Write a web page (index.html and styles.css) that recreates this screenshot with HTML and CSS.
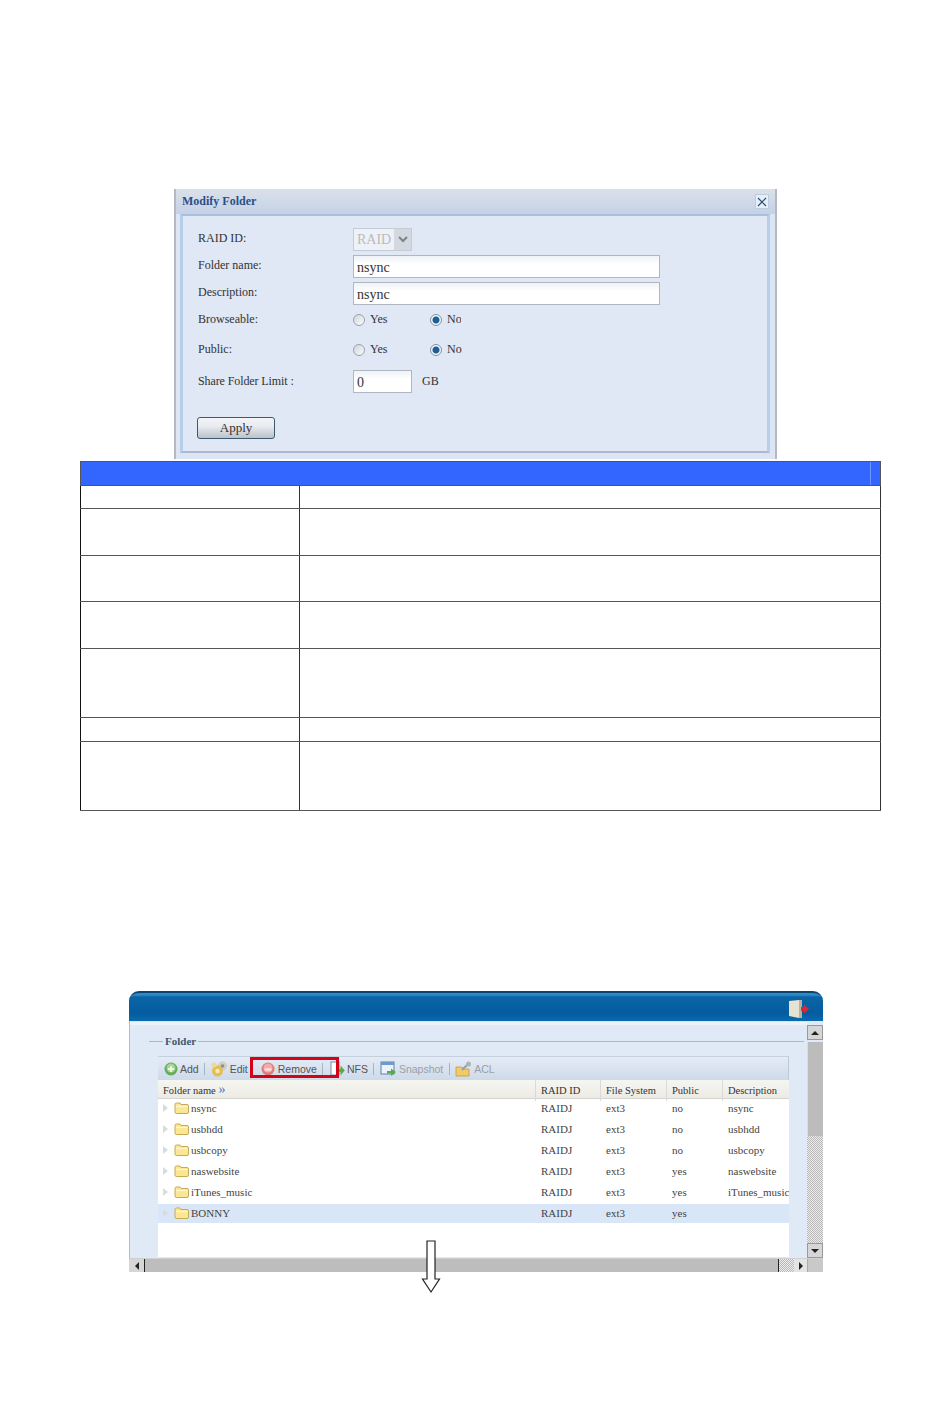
FILE: index.html
```html
<!DOCTYPE html>
<html lang="en">
<head>
  <meta charset="UTF-8">
  <title>Modify Folder</title>
  <link rel="stylesheet" href="styles.css">
</head>
<body>
  <div class="page">

    <!-- Modify Folder dialog -->
    <div class="dialog">
      <div class="dialog-title">
        <span>Modify Folder</span>
        <button class="close-btn">
          <svg width="10" height="10" viewBox="0 0 10 10"><path d="M1 1L9 9M9 1L1 9" stroke="#2c4a6e" stroke-width="1.2" fill="none"/></svg>
        </button>
      </div>
      <div class="dialog-body">
        <div class="form-row row-first">
          <label>RAID ID:</label>
          <div class="combo">
            <span class="combo-text">RAID</span>
            <span class="combo-btn">
              <svg width="10" height="7" viewBox="0 0 10 7"><path d="M1 1L5 5L9 1" stroke="#7b848c" stroke-width="2" fill="none"/></svg>
            </span>
          </div>
        </div>
        <div class="form-row">
          <label>Folder name:</label>
          <input class="text-input wide" type="text" value="nsync">
        </div>
        <div class="form-row">
          <label>Description:</label>
          <input class="text-input wide" type="text" value="nsync">
        </div>
        <div class="form-row">
          <label>Browseable:</label>
          <div class="radios clipped">
            <span class="radio-item"><i class="radio"></i>Yes</span>
            <span class="radio-item"><i class="radio on"></i>No</span>
          </div>
        </div>
        <div class="form-row row-public">
          <label>Public:</label>
          <div class="radios">
            <span class="radio-item"><i class="radio"></i>Yes</span>
            <span class="radio-item"><i class="radio on"></i>No</span>
          </div>
        </div>
        <div class="form-row row-limit">
          <label class="tight">Share Folder Limit :</label>
          <input class="text-input short" type="text" value="0">
          <span class="unit">GB</span>
        </div>
        <button class="apply-btn">Apply</button>
      </div>
    </div>

    <!-- Empty description table -->
    <table class="desc-table">
      <colgroup>
        <col class="col-a">
        <col>
      </colgroup>
      <tr class="h24">
        <th colspan="2"><div class="th-inner"></div></th>
      </tr>
      <tr class="h23"><td></td><td></td></tr>
      <tr class="h47"><td></td><td></td></tr>
      <tr class="h46"><td></td><td></td></tr>
      <tr class="h47"><td></td><td></td></tr>
      <tr class="h69"><td></td><td></td></tr>
      <tr class="h24"><td></td><td></td></tr>
      <tr class="h69"><td></td><td></td></tr>
    </table>

    <!-- Folder manager window -->
    <div class="app">
      <div class="app-bar">
        <svg class="logout" width="22" height="20" viewBox="0 0 22 20">
          <path d="M1 2L11 1V19L1 17Z" fill="#e6e2d2"/>
          <path d="M11 1H14V19H11Z" fill="#b4b3a2"/>
          <path d="M13 8H16V5.500L21 10L16 14.500V12H13Z" fill="#d8283c"/>
        </svg>
      </div>
      <div class="app-main">
        <div class="content">
          <fieldset class="folder-box">
            <legend>Folder</legend>
            <div class="toolbar">
              <span class="tool">
                <svg width="14" height="14" viewBox="0 0 14 14"><circle cx="7" cy="7" r="6.5" fill="#66ad5a"/><circle cx="7" cy="6" r="4.500" fill="#a4d496"/><path d="M7 4V10M4 7H10" stroke="#eef8e8" stroke-width="1.800"/></svg>
                Add
              </span>
              <i class="sep"></i>
              <span class="tool">
                <svg width="17" height="16" viewBox="0 0 17 16"><circle cx="11.500" cy="5" r="4.500" fill="#cfcfc6"/><circle cx="11.500" cy="5" r="1.800" fill="#8f8f86"/><circle cx="6.500" cy="10" r="5.500" fill="#e6bd55"/><circle cx="6.500" cy="10" r="2.200" fill="#fbeeb8"/><circle cx="3" cy="4" r="2.500" fill="#e9d9a0"/></svg>
                Edit
              </span>
              <span class="tool tool-remove">
                <svg width="14" height="14" viewBox="0 0 14 14"><circle cx="7" cy="7" r="6.500" fill="#e07c78"/><circle cx="7" cy="6" r="4.500" fill="#f2adaa"/><path d="M3.500 7.500H10.500" stroke="#fbe3e1" stroke-width="2.200"/></svg>
                Remove
              </span>
              <i class="sep"></i>
              <span class="tool">
                <svg width="16" height="16" viewBox="0 0 16 16"><rect x="2" y="1" width="8" height="13" fill="#fff" stroke="#7a8ca6"/><path d="M9 8H11.500V4.500L15.800 9.500L11.500 14.500V11H9Z" fill="#5aaa48"/></svg>
                NFS
              </span>
              <i class="sep"></i>
              <span class="tool muted">
                <svg width="17" height="16" viewBox="0 0 17 16"><rect x="1" y="1" width="13" height="12" fill="#eaf2fb" stroke="#5a82ad"/><rect x="1" y="1" width="13" height="3" fill="#6f9bcb"/><path d="M7 10H11V7.500L16 11L11 15V12.500H7Z" fill="#5aaa48"/></svg>
                Snapshot
              </span>
              <i class="sep"></i>
              <span class="tool muted">
                <svg width="17" height="16" viewBox="0 0 17 16"><path d="M1 6H7L8 8H14V15H1Z" fill="#f2cb67" stroke="#c49a3c" stroke-width=".8"/><path d="M7 9L13 3" stroke="#989fa8" stroke-width="2"/><circle cx="13.500" cy="3" r="2.500" fill="#adb3bb"/></svg>
                ACL
              </span>
            </div>

            <div class="grid">
              <div class="grid-head">
                <span>Folder name <b class="more">&raquo;</b></span>
                <span>RAID ID</span>
                <span>File System</span>
                <span>Public</span>
                <span>Description</span>
              </div>
              <div class="grid-rows">
                <div class="grid-row">
                  <span class="name"><i class="twist"></i><svg class="folder" viewBox="0 0 15 12"><use href="#folder-icon"/></svg>nsync</span>
                  <span>RAIDJ</span><span>ext3</span><span>no</span><span>nsync</span>
                </div>
                <div class="grid-row">
                  <span class="name"><i class="twist"></i><svg class="folder" viewBox="0 0 15 12"><use href="#folder-icon"/></svg>usbhdd</span>
                  <span>RAIDJ</span><span>ext3</span><span>no</span><span>usbhdd</span>
                </div>
                <div class="grid-row">
                  <span class="name"><i class="twist"></i><svg class="folder" viewBox="0 0 15 12"><use href="#folder-icon"/></svg>usbcopy</span>
                  <span>RAIDJ</span><span>ext3</span><span>no</span><span>usbcopy</span>
                </div>
                <div class="grid-row">
                  <span class="name"><i class="twist"></i><svg class="folder" viewBox="0 0 15 12"><use href="#folder-icon"/></svg>naswebsite</span>
                  <span>RAIDJ</span><span>ext3</span><span>yes</span><span>naswebsite</span>
                </div>
                <div class="grid-row">
                  <span class="name"><i class="twist"></i><svg class="folder" viewBox="0 0 15 12"><use href="#folder-icon"/></svg>iTunes_music</span>
                  <span>RAIDJ</span><span>ext3</span><span>yes</span><span>iTunes_music</span>
                </div>
                <div class="grid-row selected">
                  <span class="name"><i class="twist"></i><svg class="folder" viewBox="0 0 15 12"><use href="#folder-icon"/></svg>BONNY</span>
                  <span>RAIDJ</span><span>ext3</span><span>yes</span><span></span>
                </div>
              </div>
            </div>
          </fieldset>
        </div>

        <div class="vscroll">
          <span class="sb-btn"><i class="tri tri-up"></i></span>
          <span class="sb-thumb"></span>
          <span class="sb-track"></span>
          <span class="sb-btn"><i class="tri tri-down"></i></span>
        </div>
      </div>

      <div class="hscroll">
        <span class="hb-btn"><i class="tri tri-left"></i></span>
        <span class="hb-thumb"></span>
        <span class="hb-track"></span>
        <span class="hb-btn"><i class="tri tri-right"></i></span>
        <span class="hb-corner"></span>
      </div>

      <!-- annotation box round the Remove button -->
      <div class="callout"></div>
    </div>

    <!-- annotation arrow -->
    <svg class="down-arrow" width="20" height="54" viewBox="0 0 20 54">
      <path d="M6 1H14V39H18.500L10 52L1.500 39H6Z" fill="#fff" stroke="#222" stroke-width="1.200"/>
    </svg>

    <svg class="defs" width="0" height="0">
      <defs>
        <g id="folder-icon">
          <path d="M1 2.500Q1 1 2.500 1H6L7 2.500H13Q14.500 2.500 14.500 4V10Q14.500 11.500 13 11.500H2.500Q1 11.500 1 10Z" fill="#fbe793" stroke="#c2a247" stroke-width=".9"/>
          <path d="M2 4.500H13.500" stroke="#fff6cf" stroke-width="1.200"/>
        </g>
      </defs>
    </svg>
  </div>
</body>
</html>
```

FILE: styles.css
```css
body {
  margin: 0;
  background-color: white;
  font-family: 'Liberation Serif', serif;
  color: #333;
}

.page {
  position: relative;
  width: 950px;
  height: 1420px;
  overflow: hidden;
  padding-top: 189px;
  box-sizing: border-box;
}

.defs {
  position: absolute;
}

/* dialog */
.dialog {
  width: 603px;
  height: 270px;
  margin-left: 174px;
  box-sizing: border-box;
  background-color: #dde5f3;
  border-left: 2px solid #b4b8bf;
  border-right: 2px solid #b4b8bf;
  padding-bottom: 6px;
  display: flex;
  flex-direction: column;
}

.dialog-title {
  height: 25px;
  flex: none;
  display: flex;
  align-items: center;
  justify-content: space-between;
  padding: 0 6px 0 6px;
  background: linear-gradient(#dbe1ea, #c4d1e6);
  color: #2b4f88;
  font-size: 12px;
  font-weight: bold;
}

.close-btn {
  width: 14px;
  height: 15px;
  padding: 0;
  display: flex;
  align-items: center;
  justify-content: center;
  background-color: #e6eff9;
  border: 1px solid #bccbdd;
}

.dialog-body {
  flex: 1;
  margin: 0 5px 0 4px;
  padding: 0 0 0 15px;
  background-color: #e0e7f5;
  border-left: 3px solid #b6cdeb;
  border-right: 3px solid #b6cdeb;
  border-top: 2px solid #a9bfdd;
  border-bottom: 2px solid #a9b8d6;
}

.form-row {
  display: flex;
  align-items: center;
  height: 23px;
  margin-bottom: 4px;
  font-size: 12px;
}

.row-first {
  margin-top: 12px;
}

.row-public {
  margin-top: 7px;
}

.row-limit {
  margin-top: 8px;
  margin-bottom: 24px;
}

.form-row label {
  width: 155px;
  flex: none;
  margin-top: -3px;
}

.form-row label.tight {
  letter-spacing: -0.1px;
  margin-top: 0;
}

.combo {
  display: flex;
  width: 59px;
  height: 23px;
  box-sizing: border-box;
  background-color: #eef2f8;
  border: 1px solid #c5ccd6;
}

.combo-text {
  flex: 1;
  color: #bbb;
  font-size: 14px;
  line-height: 22px;
  padding-left: 3px;
}

.combo-btn {
  width: 17px;
  display: flex;
  align-items: center;
  justify-content: center;
  background-color: #d3d9e1;
}

.text-input {
  height: 23px;
  box-sizing: border-box;
  padding: 2px 0 0 3px;
  border: 1px solid #b0b7c3;
  background: linear-gradient(#eef1f6, white 8px);
  font-family: 'Liberation Serif', serif;
  font-size: 14px;
  color: #333;
  outline: none;
}

.wide {
  width: 307px;
}

.short {
  width: 59px;
}

.unit {
  margin-left: 10px;
  margin-top: -1px;
}

.radios {
  display: flex;
  margin-top: -2px;
}

.clipped {
  width: 108px;
  overflow: hidden;
}

.radio-item {
  width: 77px;
  flex: none;
  display: flex;
  align-items: center;
  gap: 5px;
}

.radio {
  width: 12px;
  height: 12px;
  box-sizing: border-box;
  border: 1px solid #9aa3ad;
  border-radius: 50%;
  background: linear-gradient(135deg, #cfd4da, #fbfcfd);
}

.radio.on {
  background: radial-gradient(circle, #1c5f96 0, #1c5f96 3px, #f5f7fa 4px);
  border-color: #7f93a8;
}

.apply-btn {
  display: block;
  width: 78px;
  height: 22px;
  margin-left: -1px;
  padding: 0;
  background: linear-gradient(#f2f4f8, #e9ecf1 40%, #bcc2ca);
  border: 1px solid #3b5a70;
  border-radius: 3px;
  font-family: 'Liberation Serif', serif;
  font-size: 13px;
  color: #333;
}

/* table */
.desc-table {
  width: 801px;
  margin: 2px 0 0 80px;
  border-collapse: collapse;
  table-layout: fixed;
}

.desc-table th {
  background-color: #3366ff;
  border: 1px solid #555;
  padding: 0;
}

.desc-table td {
  border-top: 1px solid #555;
  border-bottom: 1px solid #555;
  border-left: 1px solid #111;
  border-right: 1px solid #333;
  padding: 0;
}

.col-a {
  width: 219px;
}

.th-inner {
  width: 789px;
  height: 23px;
  border-right: 1px solid #6f93ff;
}

.h23 { height: 23px; }
.h24 { height: 24px; }
.h46 { height: 46px; }
.h47 { height: 47px; }
.h69 { height: 69px; }

/* folder window */
.app {
  position: relative;
  width: 694px;
  margin: 180px 0 0 129px;
}

.app-bar {
  height: 30px;
  box-sizing: border-box;
  display: flex;
  align-items: center;
  justify-content: flex-end;
  padding-right: 13px;
  border-radius: 10px 10px 0 0;
  border-top: 2px solid #0e4470;
  background: linear-gradient(#2c8ac6 0, #2c8ac6 2px, #0b64a6 4px, #045c9e 20px, #0a6ab0);
}

.logout {
  margin-top: 3px;
}

.app-main {
  display: flex;
  height: 237px;
  border-left: 1px solid #b8bcc2;
  background-color: #e0e9f6;
  box-sizing: border-box;
}

.content {
  flex: 1;
  min-width: 0;
  border-top: 1px solid #d5e4f3;
  box-shadow: inset 0 3px 0 #edf2f9;
}

.folder-box {
  margin: 13px 3px 0 19px;
  padding: 9px 0 0 9px;
  border: none;
  border-top: 1px solid #aab7c6;
  min-width: 0;
}

.folder-box legend {
  margin-left: 5px;
  padding: 0 2px;
  font-size: 11px;
  font-weight: bold;
  color: #46566c;
}

.toolbar {
  display: flex;
  align-items: center;
  width: 631px;
  height: 24px;
  box-sizing: border-box;
  padding: 0 0 0 6px;
  background: linear-gradient(#e4ebf5, #cedaea);
  border-top: 1px solid #c5d0df;
  border-right: 1px solid #bcc9da;
  font-family: 'Liberation Sans', sans-serif;
  font-size: 10.5px;
  color: #555;
}

.tool {
  display: flex;
  align-items: center;
  gap: 2px;
}

.tool-remove {
  gap: 3px;
  margin-left: 13px;
}

.muted {
  color: #9aa0a8;
}

.sep {
  width: 1px;
  height: 12px;
  margin: 0 5.5px;
  background-color: #a8b4c4;
}

.grid {
  width: 631px;
  background-color: white;
  font-size: 11px;
  color: #444;
}

.grid-head,
.grid-row {
  display: grid;
  grid-template-columns: 377px 65px 66px 56px 67px;
  height: 19px;
  align-items: center;
}

.grid-head {
  background: linear-gradient(#f6f6f1, #eceae5);
  border-bottom: 1px solid #d5d5d0;
  box-sizing: border-box;
  color: #333;
  font-size: 10.5px;
}

.grid-head span {
  height: 100%;
  line-height: 21px;
  padding-left: 5px;
  border-left: 1px solid #dadada;
}

.grid-head span:first-child {
  border-left: none;
}

.more {
  color: #4a80c0;
  font-weight: normal;
  font-size: 14px;
  line-height: 12px;
}

.grid-rows {
  display: flex;
  flex-direction: column;
  gap: 2px;
  height: 158px;
}

.grid-row span {
  padding: 0 0 2px 6px;
  white-space: nowrap;
}

.grid-row .name {
  display: flex;
  align-items: center;
  padding: 0 0 2px 5px;
}

.selected {
  background-color: #d8e6f8;
}

.twist {
  width: 0;
  height: 0;
  margin-right: 6px;
  border-left: 5px solid #d8dbe0;
  border-top: 4px solid transparent;
  border-bottom: 4px solid transparent;
}

.folder {
  width: 15px;
  height: 12px;
  margin-right: 2px;
  flex: none;
}

/* scrollbars */
.vscroll {
  width: 16px;
  flex: none;
  display: flex;
  flex-direction: column;
  padding-top: 4px;
  box-sizing: border-box;
  background-color: #e0e9f6;
}

.sb-btn {
  height: 15px;
  flex: none;
  display: flex;
  align-items: center;
  justify-content: center;
  background-color: #d6d6d6;
  border: 1px solid #999;
  box-sizing: border-box;
}

.sb-thumb {
  height: 94px;
  margin-top: 2px;
  flex: none;
  background-color: #bcbcbc;
  border-left: 1px solid #ddd;
}

.sb-track,
.hb-track {
  flex: 1;
  background: repeating-conic-gradient(#b8b8b8 0 25%, #ececec 0 50%) 0 0 / 2px 2px;
}

.hscroll {
  display: flex;
  height: 14px;
  background-color: #bdbdbd;
  border-top: 1px solid #d0d0d0;
  box-sizing: border-box;
}

.hb-btn {
  width: 15px;
  flex: none;
  display: flex;
  align-items: center;
  justify-content: center;
  background-color: #d6d6d6;
  border-right: 1px solid #222;
}

.hb-btn:nth-last-child(2) {
  background-color: #e4e4e4;
  border-right: 1px solid #aaa;
  width: 13px;
}

.hb-thumb {
  width: 633px;
  flex: none;
  border-right: 1px solid #222;
}

.hb-corner {
  flex: 1;
  background-color: #c9c9c9;
}

.tri {
  width: 0;
  height: 0;
}

.tri-up {
  border-left: 4px solid transparent;
  border-right: 4px solid transparent;
  border-bottom: 4px solid #222;
}

.tri-down {
  border-left: 4px solid transparent;
  border-right: 4px solid transparent;
  border-top: 4px solid #222;
}

.tri-left {
  border-top: 4px solid transparent;
  border-bottom: 4px solid transparent;
  border-right: 4px solid #222;
}

.tri-right {
  border-top: 4px solid transparent;
  border-bottom: 4px solid transparent;
  border-left: 4px solid #222;
}

/* annotations */
.callout {
  position: absolute;
  left: 121px;
  top: 66px;
  width: 89px;
  height: 21px;
  box-sizing: border-box;
  border: 3px solid #d40418;
}

.down-arrow {
  position: absolute;
  left: 421px;
  top: 1240px;
}
```
